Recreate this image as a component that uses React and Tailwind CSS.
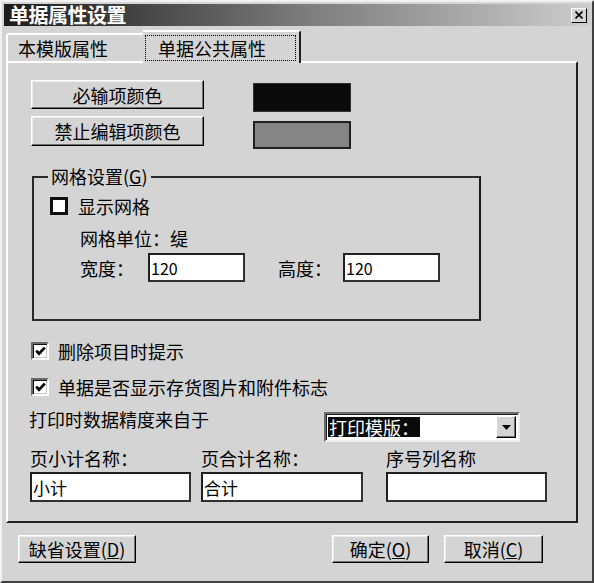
import React from "react";

const font = "font-['Noto_Sans_CJK_SC','Noto_Sans',sans-serif]";

function RaisedButton({ className = "", children }) {
  return (
    <div
      className={`flex items-center justify-center border border-t-white border-l-white border-r-black border-b-black shadow-[inset_-1px_-1px_0_#707070,inset_1px_1px_0_#ececec] bg-[#d4d4d4] text-[18px] leading-none text-black ${className}`}
    >
      {children}
    </div>
  );
}

function TextBox({ className = "", value = "" }) {
  return (
    <div
      className={`flex items-center bg-white border-2 border-t-[#202020] border-l-[#202020] border-r-[#303030] border-b-[#303030] pl-[1px] text-[16px] leading-none text-black ${className}`}
    >
      {value}
    </div>
  );
}

function CheckedBox() {
  return (
    <div className="w-[18px] h-[18px] shrink-0 bg-white border-2 border-t-[#6a6a6a] border-l-[#6a6a6a] border-r-white border-b-white shadow-[inset_1px_1px_0_#101010,inset_-1px_-1px_0_#c8c8c8] flex items-center justify-center">
      <svg width="11" height="10" viewBox="0 0 11 10">
        <path d="M1.2 4.6 L4 7.6 L9.8 1.6" stroke="black" strokeWidth="2.8" fill="none" />
      </svg>
    </div>
  );
}

export default function App() {
  return (
    <div
      className={`${font} w-[594px] h-[583px] bg-[#d4d4d4] border-t-2 border-l-2 border-t-[#f2f2f2] border-l-[#f2f2f2] border-r-2 border-b-2 border-r-[#404040] border-b-[#404040] overflow-hidden`}
    >
      {/* title bar */}
      <div className="ml-[2px] mt-[2px] mr-[2px] h-[22px] bg-gradient-to-r from-[#1c1c1c] via-[#7a7a7a] to-[#cdcdcd] flex items-center justify-between pl-[5px] pr-[3px]">
        <span className="text-white font-bold text-[20px] leading-none tracking-[-0.5px]">单据属性设置</span>
        <div className="w-[16px] h-[15px] bg-[#d4d4d4] border border-t-white border-l-white border-r-black border-b-black flex items-center justify-center">
          <svg width="8" height="8" viewBox="0 0 8 8">
            <path d="M0.5 0.5 L7.5 7.5 M7.5 0.5 L0.5 7.5" stroke="black" strokeWidth="1.6" />
          </svg>
        </div>
      </div>

      {/* tabs */}
      <div className="flex items-end h-[35px] pl-[4px]">
        <div className="w-[137px] h-[28px] border-t-2 border-l-2 border-white rounded-tl-[3px] flex items-center pl-[10px] text-[18px] leading-none text-black">
          本模版属性
        </div>
        <div className="relative w-[158px] h-[33px] border-t-2 border-white border-r-2 border-r-[#202020] rounded-tr-[2px] bg-[#d4d4d4] z-10 -mb-[2px] flex items-start pt-[3px] pl-[2px]">
          <div className="w-[151px] h-[26px] border border-dotted border-black flex items-center pl-[12px] text-[18px] leading-none text-black">
            单据公共属性
          </div>
        </div>
      </div>

      {/* panel */}
      <div className="ml-[4px] w-[572px] h-[462px] border-t-2 border-l-2 border-white border-r-2 border-b-2 border-r-[#202020] border-b-[#202020] flex flex-col">
        {/* color rows */}
        <div className="flex items-start mt-[17px] ml-[23px]">
          <RaisedButton className="w-[173px] h-[29px]">必输项颜色</RaisedButton>
          <div className="ml-[49px] mt-[3px] w-[98px] h-[29px] bg-[#0a0a0a] border border-[#303030]" />
        </div>
        <div className="flex items-start mt-[4px] ml-[23px]">
          <RaisedButton className="mt-[0px] w-[173px] h-[30px]">禁止编辑项颜色</RaisedButton>
          <div className="ml-[49px] mt-[5px] w-[98px] h-[28px] bg-[#858585] border-2 border-[#202020]" />
        </div>

        {/* group box */}
        <div className="relative ml-[24px] mt-[27px] w-[449px] h-[145px] border-2 border-[#2a2a2a] border-r-[#1a1a1a] pl-[16px] pt-[19px]">
          <span className="absolute left-[14px] -top-[13px] px-[3px] bg-[#d4d4d4] text-[18px] leading-[22px] text-black">
            网格设置(<span className="underline">G</span>)
          </span>
          <div className="flex items-center">
            <div className="w-[18px] h-[18px] bg-white border-[3px] border-[#101010]" />
            <span className="ml-[10px] text-[18px] leading-none text-black">显示网格</span>
          </div>
          <div className="ml-[30px] mt-[14px] text-[18px] leading-none text-black">网格单位：缇</div>
          <div className="flex items-center ml-[30px] mt-[6px]">
            <span className="w-[68px] text-[18px] leading-none text-black">宽度：</span>
            <TextBox className="w-[97px] h-[29px]" value="120" />
            <span className="ml-[33px] w-[65px] text-[18px] leading-none text-black">高度：</span>
            <TextBox className="w-[97px] h-[29px]" value="120" />
          </div>
        </div>

        {/* checkboxes */}
        <div className="flex items-center ml-[23px] mt-[21px]">
          <CheckedBox />
          <span className="ml-[9px] text-[18px] leading-none text-black">删除项目时提示</span>
        </div>
        <div className="flex items-center ml-[23px] mt-[18px]">
          <CheckedBox />
          <span className="ml-[9px] text-[18px] leading-none text-black">单据是否显示存货图片和附件标志</span>
        </div>

        {/* print precision row */}
        <div className="flex items-start ml-[21px] mt-[14px]">
          <span className="w-[295px] text-[18px] leading-none text-black">打印时数据精度来自于</span>
          <div className="mt-[2px] w-[196px] h-[30px] bg-white border-2 border-t-[#6a6a6a] border-l-[#6a6a6a] border-r-[#efefef] border-b-[#efefef] shadow-[inset_1px_1px_0_#202020] flex items-center justify-between pl-[2px] pr-[2px]">
            <span className="bg-[#0a0a0a] text-white text-[18px] leading-[20px] px-[1px]">打印模版：</span>
            <div className="w-[20px] h-[22px] bg-[#d4d4d4] border border-t-white border-l-white border-r-black border-b-black shadow-[inset_-1px_-1px_0_#707070] flex items-center justify-center">
              <svg width="9" height="5" viewBox="0 0 9 5">
                <path d="M0 0 L9 0 L4.5 5 Z" fill="black" />
              </svg>
            </div>
          </div>
        </div>

        {/* names */}
        <div className="flex ml-[22px] mt-[7px]">
          <div className="flex flex-col w-[171px]">
            <span className="text-[18px] leading-none text-black">页小计名称：</span>
            <TextBox className="mt-[5px] w-[161px] h-[30px] text-[17px]" value="小计" />
          </div>
          <div className="flex flex-col w-[185px]">
            <span className="text-[18px] leading-none text-black">页合计名称：</span>
            <TextBox className="mt-[5px] w-[162px] h-[30px] text-[17px]" value="合计" />
          </div>
          <div className="flex flex-col">
            <span className="text-[18px] leading-none text-black">序号列名称</span>
            <TextBox className="mt-[5px] w-[161px] h-[30px]" value="" />
          </div>
        </div>
      </div>

      {/* bottom buttons */}
      <div className="flex mt-[12px]">
        <RaisedButton className="ml-[16px] w-[118px] h-[28px]">
          <span>缺省设置(<span className="underline">D</span>)</span>
        </RaisedButton>
        <RaisedButton className="ml-[196px] w-[97px] h-[28px]">
          <span>确定(<span className="underline">O</span>)</span>
        </RaisedButton>
        <RaisedButton className="ml-[15px] w-[99px] h-[28px]">
          <span>取消(<span className="underline">C</span>)</span>
        </RaisedButton>
      </div>
    </div>
  );
}
